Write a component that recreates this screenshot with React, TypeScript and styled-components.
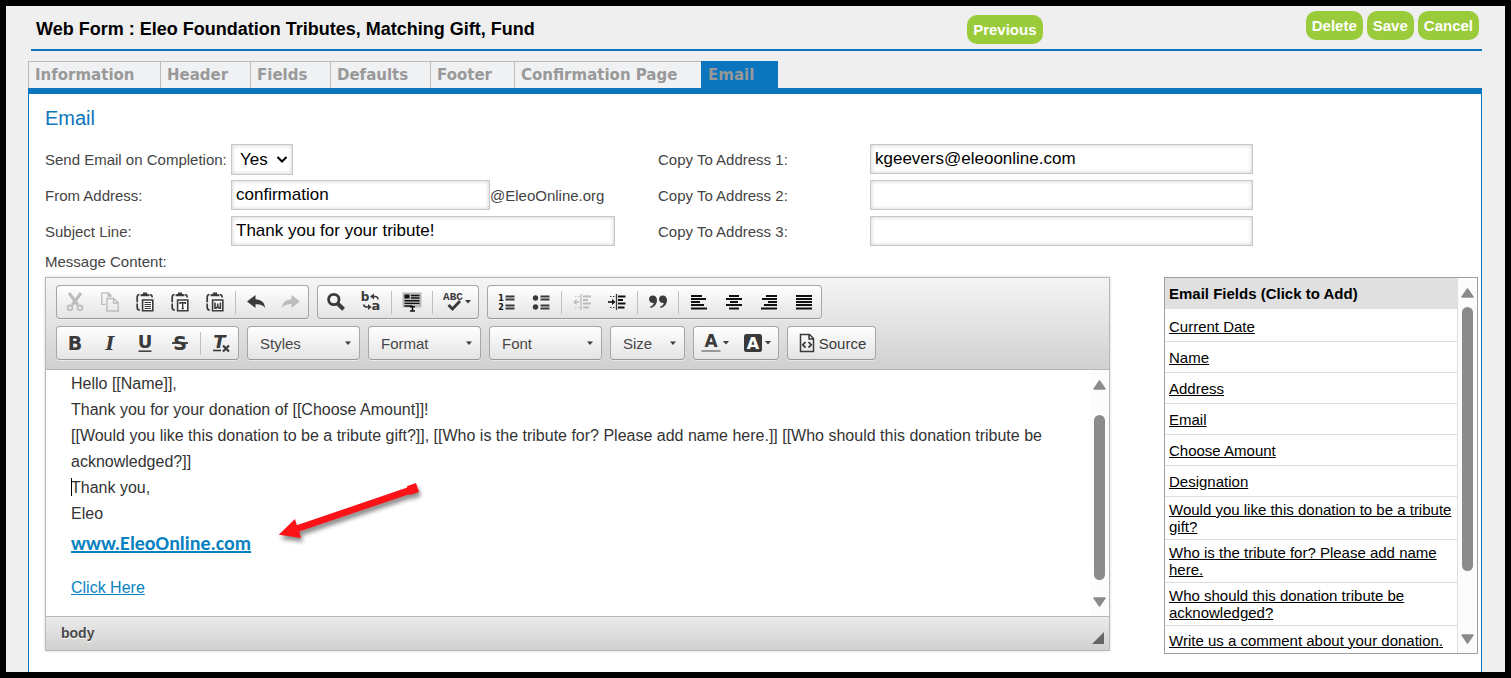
import React, { useState } from 'react';
import styled, { createGlobalStyle } from 'styled-components';

const blue = '#0b75bd';
const ink = '#3a3a3a';
const sans = "'Liberation Sans', Arial, Helvetica, sans-serif";

const GlobalStyle = createGlobalStyle`
  *, *::before, *::after { box-sizing: border-box; }
  body { margin: 0; font-family: ${sans}; font-size: 15px; color: #444; }
  input, select, button { font-family: inherit; margin: 0; }
`;

const Frame = styled.div`
  display: flex;
  flex-direction: column;
  min-height: 100vh;
  padding: 0 23px 0 22px;
  border: 6px solid #000;
  background: #efefef;
`;

const Header = styled.header`
  display: flex;
  height: 45px;
  flex: none;
  margin-left: 3px;
  padding: 5px 3px 0 5px;
  border-bottom: 2px solid ${blue};
`;

const Title = styled.h1`
  flex: 11 1 0;
  margin: 7px 0 0;
  font-size: 18px;
  line-height: 22px;
  color: #000;
`;

const Steps = styled.div`
  flex: 4 1 0;
  padding-top: 4px;
`;

const Actions = styled.div`
  display: flex;
  gap: 4px;
`;

const PillButton = styled.button`
  height: 29px;
  padding: 0 6px;
  border: 0;
  border-radius: 10px;
  background: #9acb3b;
  color: #fff;
  font-size: 15px;
  font-weight: bold;
`;

const Tabs = styled.nav`
  display: flex;
  flex: none;
  margin-top: 10px;
  border-bottom: 6px solid ${blue};
`;

const Tab = styled.a<{ $active?: boolean; $width: number }>`
  width: ${p => p.$width}px;
  height: 27px;
  padding-left: 6px;
  border-top: 1px solid ${p => (p.$active ? blue : '#bbb')};
  border-left: 1px solid ${p => (p.$active ? blue : '#bbb')};
  background: ${p => (p.$active ? blue : '#f0f1f3')};
  font: bold 15px/26px 'DejaVu Sans', Verdana, sans-serif;
  color: #999;
  text-decoration: none;
  white-space: nowrap;
`;

const Panel = styled.main`
  flex: 1;
  padding: 12px 3px 16px 16px;
  border: solid ${blue};
  border-width: 0 1px;
  background: #fff;
`;

const PanelTitle = styled.h2`
  margin: 0 0 14px;
  font-size: 20px;
  line-height: 24px;
  font-weight: normal;
  color: ${blue};
`;

const Form = styled.form`
  display: grid;
  grid-template-columns: 186px minmax(0, 384px) 255px minmax(0, 383px);
  grid-auto-rows: 30px;
  row-gap: 6px;
  align-items: center;
`;

const Label = styled.label<{ $indent?: boolean }>`
  padding-left: ${p => (p.$indent ? 43 : 0)}px;
  white-space: nowrap;
`;

const Field = styled.div`
  display: flex;
  align-items: center;
`;

const TextBox = styled.input<{ $width?: string }>`
  width: ${p => p.$width ?? '100%'};
  height: 30px;
  padding: 0 4px 1px;
  border: 1px solid #c8c8c8;
  background: #fff;
  box-shadow: inset 0 0 4px #ccc;
  font-size: 17px;
  color: #000;
`;

const SelectBox = styled.span<{ $width: number }>`
  position: relative;
  display: block;
  width: ${p => p.$width}px;
`;

const YesNo = styled.select`
  appearance: none;
  display: block;
  width: 100%;
  height: 31px;
  padding: 0 8px;
  border: 1px solid #c8c8c8;
  border-radius: 0;
  background: #fff;
  box-shadow: inset 0 0 4px #ccc;
  font-size: 17px;
  color: #000;
`;

const SelectArrow = styled.svg<{ $right: number }>`
  position: absolute;
  right: ${p => p.$right}px;
  top: 0;
  height: 100%;
  pointer-events: none;
`;

const MessageLabel = styled.div`
  margin-top: 6px;
  line-height: 20px;
`;

const Columns = styled.div`
  display: grid;
  grid-template-columns: minmax(0, 1fr) 314px;
  gap: 54px;
  align-items: start;
  margin-top: 5px;
`;

const Editor = styled.section`
  border: 1px solid #b6b6b6;
  box-shadow: 0 0 3px rgba(0, 0, 0, 0.15);
`;

const Toolbar = styled.div`
  display: flex;
  flex-direction: column;
  gap: 7px;
  padding: 7px 10px 9px;
  border-bottom: 1px solid #b6b6b6;
  background: linear-gradient(#f5f5f5, #cfd1cf);
`;

const ToolRow = styled.div`
  display: flex;
  gap: 8px;
`;

const toolBox = `
  height: 34px;
  border: 1px solid #a6a6a6;
  border-bottom-color: #979797;
  border-radius: 4px;
  background: linear-gradient(#fff, #e4e4e4);
  box-shadow: 0 1px 0 rgba(255, 255, 255, 0.5);
`;

const ToolGroup = styled.div`
  display: flex;
  align-items: center;
  ${toolBox}
`;

const ToolButton = styled.button<{ $width?: number; $faded?: boolean }>`
  display: flex;
  align-items: center;
  justify-content: center;
  gap: 2px;
  width: ${p => p.$width ?? 35}px;
  height: 32px;
  padding: 0;
  border: 0;
  background: none;
  color: ${p => (p.$faded ? '#bcbcbc' : ink)};
  font-size: 15px;
`;

const Separator = styled.i`
  width: 1px;
  height: 23px;
  margin: 0 2px 0 3px;
  background: #bfbfbf;
`;

const Combo = styled.select`
  appearance: none;
  display: block;
  width: 100%;
  padding: 0 12px;
  color: #474747;
  font-size: 15px;
  ${toolBox}
`;

const Body = styled.div`
  position: relative;
  display: flex;
  height: 246px;
  background: #fff;
`;

const Message = styled.div`
  flex: 1;
  min-width: 0;
  padding: 1px 25px 0;
  font-size: 16px;
  line-height: 26px;
  color: #333;

  p { margin: 0; }
`;

const Caret = styled.span`
  position: absolute;
  width: 1px;
  height: 18px;
  margin-top: 3px;
  background: #000;
`;

const MessageLink = styled.a`
  color: #0782c1;
`;

const SiteLine = styled.p`
  && { margin: 3px 0 19px; }
  font: bold 20px/26px Calibri, Carlito, Lato, sans-serif;
`;

const RedArrow = styled.svg`
  position: absolute;
  left: 224px;
  top: 104px;
  overflow: visible;
  filter: drop-shadow(2px 4px 2px rgba(0, 0, 0, 0.45));
`;

const Footer = styled.footer`
  display: flex;
  align-items: center;
  justify-content: space-between;
  height: 34px;
  padding: 0 5px 2px 15px;
  border-top: 1px solid #b6b6b6;
  background: linear-gradient(#ebebeb, #cfd1cf);
  font-size: 14px;
  font-weight: bold;
  color: #484848;
  text-shadow: 0 1px 0 #fff;
`;

const ResizeGrip = styled.svg`
  align-self: flex-end;
  margin-bottom: 4px;
`;

const ScrollBar = styled.div<{ $top: number; $bottom: number }>`
  display: flex;
  flex-direction: column;
  align-items: center;
  flex: none;
  width: 19px;
  padding: ${p => p.$top}px 0 ${p => p.$bottom}px;
  background: #fcfcfc;
`;

const Track = styled.div<{ $before: number; $after: number }>`
  flex: 1;
  width: 11px;
  padding: ${p => p.$before}px 0 ${p => p.$after}px;

  &::before {
    content: '';
    display: block;
    height: 100%;
    border-radius: 6px;
    background: #8b8b8b;
  }
`;

const FieldList = styled.aside`
  display: flex;
  height: 377px;
  border: 1px solid #a0a0a0;
  background: #fff;
  overflow: hidden;
`;

const FieldTable = styled.table`
  flex: 1;
  align-self: flex-start;
  border-collapse: separate;
  border-spacing: 0;
  font-size: 15px;
  line-height: 17px;
  color: #000;

  th {
    height: 31px;
    padding: 0 4px;
    background: #e0e0e0;
    text-align: left;
  }

  td {
    height: 31px;
    padding: 4px 2px 4px 4px;
    border-right: 1px solid #ddd;
    border-bottom: 1px solid #ddd;
  }

  tr:first-child td { height: 33px; padding-top: 6px; }

  tr:last-child td { padding: 4px 2px 6px 4px; }

  a { color: #000; }
`;

const Icon = styled.svg`
  flex: none;
  overflow: visible;
`;

const Svg = ({ children }: { children: React.ReactNode }) => (
  <Icon width="20" height="20" viewBox="0 0 20 20" fill="none" stroke="currentColor" aria-hidden="true">
    {children}
  </Icon>
);

const Glyph = ({ children, ...rest }: React.SVGProps<SVGTextElement>) => (
  <text fontWeight="bold" fontFamily="'DejaVu Sans', sans-serif" textAnchor="middle" fill="currentColor" stroke="none" {...rest}>
    {children}
  </text>
);

const Clipboard = ({ children }: { children: React.ReactNode }) => (
  <Svg>
    <path d="M4.500 2.500Q2.200 2.800 2.200 5V15.500Q2.200 18 4.800 18" strokeWidth="1.700" strokeDasharray="9 1.200" />
    <path d="M15 2.500Q17.200 2.800 17.200 5.400" strokeWidth="1.600" />
    <path d="M5.500 4.200V2.400L8 1.800V.6h4v1.200l2.500.6v1.800z" fill="currentColor" stroke="none" />
    <path d="M7.600 8h10.200v10.800H7.600z" strokeWidth="1.600" fill="#fff" />
    {children}
  </Svg>
);

const DownArrow = () => (
  <Icon width="6" height="4" viewBox="0 0 6 4" aria-hidden="true"><path d="M0 0h6L3 3.500z" fill={ink} /></Icon>
);

const icons: Record<string, React.ReactNode> = {
  Cut: (
    <Svg>
      <path d="M4 1 12.800 13M16 1 7.200 13" strokeWidth="3" />
      <circle cx="5" cy="15.800" r="2.400" strokeWidth="1.800" />
      <circle cx="15" cy="15.800" r="2.400" strokeWidth="1.800" />
    </Svg>
  ),
  Copy: (
    <Svg>
      <path d="M5.500 12.300H1.800V.8h6.400L11 3.600V5M8 1v3h3" strokeWidth="1.300" />
      <path d="M7 6.500h6.700l4.500 4.300V19H7zM13.500 6.600V11H18" strokeWidth="1.400" />
    </Svg>
  ),
  Paste: <Clipboard><path d="M9.500 10.500H16M9.500 12.500H16M9.500 14.500H16M9.500 16.500H16" strokeWidth="1.200" /></Clipboard>,
  'Paste as plain text': <Clipboard><path d="M10 12v-1.300h5.400V12M12.700 10.700v6M11.500 16.600h2.400" strokeWidth="1.400" /></Clipboard>,
  'Paste from Word': <Clipboard><path d="M10 10.500v5.800h1.200l1.500-2 1.500 2h1.200v-5.800M12.700 11.500v3" strokeWidth="1.600" /></Clipboard>,
  Undo: <Svg><path d="M1 9.500 9.500 3v4.200C15 7.300 18.800 10.500 19 16c-2-3-5-4-9.500-3.700V16z" fill="currentColor" stroke="none" /></Svg>,
  Redo: <Svg><path d="M19 9.500 10.500 3v4.200C5 7.300 1.200 10.500 1 16c2-3 5-4 9.500-3.700V16z" fill="currentColor" stroke="none" /></Svg>,
  Find: <Svg><circle cx="7.800" cy="7.500" r="5.200" strokeWidth="2.800" /><path d="m11.800 11.800 5.800 5.500" strokeWidth="4" /></Svg>,
  Replace: (
    <Svg>
      <Glyph x={4} y={9} fontSize={12}>b</Glyph>
      <Glyph x={15} y={18} fontSize={13}>a</Glyph>
      <path d="M12 4.500h2q3 0 3 3M8 15H6q-3 0-3.500-2.500" strokeWidth="1.500" />
      <path d="m9 4.500 4-3v6zM10.500 15 7 12v6z" fill="currentColor" stroke="none" />
    </Svg>
  ),
  'Select all': (
    <Svg>
      <path d="M.5.500h19v15H.5z" fill="#b8b8b8" stroke="none" />
      <path d="M2.500 2.500h5v4h-5z" fill="#111" stroke="none" />
      <path d="M9 3.500h8.500M9 6h8.500M2.500 8.800h15M2.500 11.400h15M2.500 14h8" stroke="#111" strokeWidth="1.400" />
      <path d="M8 14.800h5M10.500 14.800v4M8 19h5" stroke="#111" strokeWidth="1.500" />
    </Svg>
  ),
  'Spell check': (
    <>
      <Svg>
        <Glyph x={10} y={8} fontSize={11} fontFamily="'Liberation Mono', monospace">ABC</Glyph>
        <path d="m5.500 13 4 4 7.500-8" strokeWidth="2.800" />
      </Svg>
      <DownArrow />
    </>
  ),
  'Numbered list': (
    <Svg>
      <Glyph x={5} y={9} fontSize={8} fill="#111">1</Glyph>
      <Glyph x={5} y={18} fontSize={8} fill="#111">2</Glyph>
      <path d="M9.500 4.500h9M9.500 7.500h9M9.500 13.500h9M9.500 16.500h9" strokeWidth="1.800" />
    </Svg>
  ),
  'Bulleted list': (
    <Svg>
      <circle cx="4.500" cy="6" r="2.700" fill="currentColor" stroke="none" />
      <circle cx="4.500" cy="15" r="2.700" fill="currentColor" stroke="none" />
      <path d="M9.500 4.500h9M9.500 7.500h9M9.500 13.500h9M9.500 16.500h9" strokeWidth="1.800" />
    </Svg>
  ),
  'Decrease indent': (
    <Svg>
      <path d="M9 2v16" strokeWidth="1.300" />
      <path d="M11 4.500h8M11 8h5M11 11.500h8M11 15.500h6" strokeWidth="1.800" />
      <path d="M2 10h5.500" strokeWidth="1.400" />
      <path d="m1 10 3.500-3v6z" fill="currentColor" stroke="none" />
      <path d="M3 4.500h5M3 15.500h5" strokeDasharray="1.500 1.500" />
    </Svg>
  ),
  'Increase indent': (
    <Svg>
      <path d="M9.500 2v16" strokeWidth="1.300" />
      <path d="M11 4.500h7.500M11 8h5M11 11.500h7.500M11 15.500h6.500" stroke="#111" strokeWidth="1.800" />
      <path d="M1 10h5" stroke="#111" strokeWidth="1.600" />
      <path d="M8.500 10 5 7v6z" fill="#111" stroke="none" />
      <path d="M3 4.500h5M3 15.500h5" strokeDasharray="1.500 1.500" />
    </Svg>
  ),
  'Block quote': (
    <Svg>
      <path
        d="M4.700 3.500C7.300 3.500 9 5.300 9 8c0 4-2.500 7-6.500 8L2 14.700C4.500 13.700 5.700 12.500 5.800 11 3.200 11.300 1 9.800 1 7.300 1 5.100 2.500 3.500 4.700 3.500zM14.700 3.500C17.300 3.500 19 5.300 19 8c0 4-2.500 7-6.500 8L12 14.700c2.500-1 3.700-2.200 3.800-3.700-2.600.3-4.800-1.200-4.800-3.700 0-2.200 1.500-3.800 3.700-3.800z"
        fill="currentColor"
        stroke="none"
      />
    </Svg>
  ),
  'Align left': <Svg><path d="M2 4h11M2 7h15M2 10h9M2 13h13M2 16.500h16" stroke="#111" strokeWidth="1.900" /></Svg>,
  Center: <Svg><path d="M5 4h10M2 7h16M6 10h8M2 13h16M5 16.500h10" stroke="#111" strokeWidth="1.900" /></Svg>,
  'Align right': <Svg><path d="M7 4h11M3 7h15M9 10h9M5 13h13M2 16.500h16" stroke="#111" strokeWidth="1.900" /></Svg>,
  Justify: <Svg><path d="M2 4h16M2 7h16M2 10h16M2 13h16M2 16.500h16" stroke="#111" strokeWidth="1.900" /></Svg>,
  Bold: <Svg><Glyph x={10} y={17} fontSize={19}>B</Glyph></Svg>,
  Italic: <Svg><Glyph x={10} y={17} fontSize={19} fontFamily="'DejaVu Serif', serif" fontStyle="italic">I</Glyph></Svg>,
  Underline: <Svg><Glyph x={10} y={15} fontSize={18}>U</Glyph><path d="M3.500 18.200h13" strokeWidth="1.500" /></Svg>,
  Strikethrough: <Svg><Glyph x={10} y={17} fontSize={19}>S</Glyph><path d="M2 10h16" strokeWidth="1.800" /></Svg>,
  'Remove format': (
    <Svg>
      <Glyph x={8.500} y={14.500} fontSize={18} fontStyle="italic">T</Glyph>
      <path d="M2 17.500h8" strokeWidth="1.600" />
      <path d="m12 12.500 6 6M18 12.500l-6 6" strokeWidth="2.200" />
    </Svg>
  ),
  'Text colour': (
    <>
      <Svg><Glyph x={10} y={14} fontSize={17}>A</Glyph><path d="M.5 18h19" stroke="#999" strokeWidth="2" /></Svg>
      <DownArrow />
    </>
  ),
  'Background colour': (
    <>
      <Svg>
        <rect x="1" y="1" width="18" height="18" rx="2.500" fill={ink} stroke="none" />
        <Glyph x={10} y={16} fontSize={16} fill="#fff">A</Glyph>
      </Svg>
      <DownArrow />
    </>
  ),
  Source: (
    <Svg>
      <path d="M3.500 1.500h9l4 4v13h-13zM12 1.500V6h4.500" strokeWidth="1.500" />
      <path d="m8.500 9-2.700 2.800 2.700 2.800M11.500 9l2.700 2.800-2.700 2.800" strokeWidth="1.800" />
    </Svg>
  ),
};

const Tool = ({ name, width, faded }: { name: string; width?: number; faded?: boolean }) => (
  <ToolButton type="button" aria-label={name} $width={width} $faded={faded}>{icons[name]}</ToolButton>
);

const ToolCombo = ({ name, width }: { name: string; width: number }) => (
  <SelectBox $width={width}>
    <Combo aria-label={name} defaultValue={name}><option>{name}</option></Combo>
    <SelectArrow $right={9} width="6" viewBox="0 0 6 4"><path d="M0 .5h6L3 4z" fill={ink} /></SelectArrow>
  </SelectBox>
);

const Triangle = ({ down }: { down?: boolean }) => (
  <Icon width="13" height="10" viewBox="0 0 13 10" aria-hidden="true">
    <path
      d={down ? 'M1 1h11L6.500 9z' : 'M1 9h11L6.500 1z'}
      fill="#8b8b8b"
      stroke="#8b8b8b"
      strokeWidth="1.500"
      strokeLinejoin="round"
    />
  </Icon>
);

const Scroller = ({ top, bottom, before, after }: { top: number; bottom: number; before: number; after: number }) => (
  <ScrollBar $top={top} $bottom={bottom} aria-hidden="true">
    <Triangle />
    <Track $before={before} $after={after} />
    <Triangle down />
  </ScrollBar>
);

const tabs: [string, number][] = [
  ['Information', 132], ['Header', 90], ['Fields', 80], ['Defaults', 100],
  ['Footer', 84], ['Confirmation Page', 187], ['Email', 77],
];

const emailFields = [
  'Current Date', 'Name', 'Address', 'Email', 'Choose Amount', 'Designation',
  'Would you like this donation to be a tribute gift?',
  'Who is the tribute for? Please add name here.',
  'Who should this donation tribute be acknowledged?',
  'Write us a comment about your donation.',
];

export default function App() {
  const [values, setValues] = useState<Record<string, string>>({
    from: 'confirmation',
    subject: 'Thank you for your tribute!',
    copy1: 'kgeevers@eleoonline.com',
    copy2: '',
    copy3: '',
  });
  const bind = (id: string) => ({
    id,
    value: values[id],
    onChange: (e: React.ChangeEvent<HTMLInputElement>) => setValues({ ...values, [id]: e.target.value }),
  });

  return (
    <Frame>
      <GlobalStyle />
      <Header>
        <Title>Web Form : Eleo Foundation Tributes, Matching Gift, Fund</Title>
        <Steps><PillButton type="button">Previous</PillButton></Steps>
        <Actions>
          <PillButton type="button">Delete</PillButton>
          <PillButton type="button">Save</PillButton>
          <PillButton type="button">Cancel</PillButton>
        </Actions>
      </Header>

      <Tabs>
        {tabs.map(([name, width]) => (
          <Tab key={name} href="#" $width={width} $active={name === 'Email'}>{name}</Tab>
        ))}
      </Tabs>

      <Panel>
        <PanelTitle>Email</PanelTitle>
        <Form>
          <Label htmlFor="send">Send Email on Completion:</Label>
          <SelectBox $width={62}>
            <YesNo id="send" defaultValue="Yes"><option>Yes</option><option>No</option></YesNo>
            <SelectArrow $right={5} width="12" viewBox="0 0 12 8">
              <path d="m1.500 1.500 4.500 4.500 4.500-4.500" fill="none" stroke="#000" strokeWidth="2" />
            </SelectArrow>
          </SelectBox>
          <Label $indent htmlFor="copy1">Copy To Address 1:</Label>
          <TextBox {...bind('copy1')} />

          <Label htmlFor="from">From Address:</Label>
          <Field><TextBox $width="259px" {...bind('from')} />@EleoOnline.org</Field>
          <Label $indent htmlFor="copy2">Copy To Address 2:</Label>
          <TextBox {...bind('copy2')} />

          <Label htmlFor="subject">Subject Line:</Label>
          <TextBox {...bind('subject')} />
          <Label $indent htmlFor="copy3">Copy To Address 3:</Label>
          <TextBox {...bind('copy3')} />
        </Form>

        <MessageLabel>Message Content:</MessageLabel>
        <Columns>
          <Editor>
            <Toolbar>
              <ToolRow>
                <ToolGroup>
                  <Tool name="Cut" faded /><Tool name="Copy" faded /><Tool name="Paste" />
                  <Tool name="Paste as plain text" /><Tool name="Paste from Word" />
                  <Separator />
                  <Tool name="Undo" /><Tool name="Redo" faded />
                </ToolGroup>
                <ToolGroup>
                  <Tool name="Find" /><Tool name="Replace" /><Separator />
                  <Tool name="Select all" /><Separator />
                  <Tool name="Spell check" width={43} />
                </ToolGroup>
                <ToolGroup>
                  <Tool name="Numbered list" /><Tool name="Bulleted list" /><Separator />
                  <Tool name="Decrease indent" faded /><Tool name="Increase indent" /><Separator />
                  <Tool name="Block quote" /><Separator />
                  <Tool name="Align left" /><Tool name="Center" /><Tool name="Align right" /><Tool name="Justify" />
                </ToolGroup>
              </ToolRow>
              <ToolRow>
                <ToolGroup>
                  <Tool name="Bold" /><Tool name="Italic" /><Tool name="Underline" /><Tool name="Strikethrough" />
                  <Separator /><Tool name="Remove format" />
                </ToolGroup>
                <ToolCombo name="Styles" width={113} />
                <ToolCombo name="Format" width={113} />
                <ToolCombo name="Font" width={113} />
                <ToolCombo name="Size" width={75} />
                <ToolGroup>
                  <Tool name="Text colour" width={42} /><Tool name="Background colour" width={42} />
                </ToolGroup>
                <ToolGroup>
                  <ToolButton type="button" $width={87}>{icons.Source}Source</ToolButton>
                </ToolGroup>
              </ToolRow>
            </Toolbar>
            <Body>
              <Message>
                <p>Hello [[Name]],</p>
                <p>Thank you for your donation of [[Choose Amount]]!</p>
                <p>
                  [[Would you like this donation to be a tribute gift?]], [[Who is the tribute for? Please add name
                  here.]] [[Who should this donation tribute be acknowledged?]]
                </p>
                <p><Caret />Thank you,</p>
                <p>Eleo</p>
                <SiteLine><MessageLink href="#">www.EleoOnline.com</MessageLink></SiteLine>
                <p><MessageLink href="#">Click Here</MessageLink></p>
              </Message>
              <Scroller top={10} bottom={9} before={25} after={17} />
              <RedArrow width="160" height="70" aria-hidden="true">
                <path d="M8.700 60.700 25 45l1.700 6.300L137.300 13.500l-.5-1.300L146 9l3 9-9 3-1.500-.6L29.300 57.500l1.700 6.500z" fill="#fb1317" />
              </RedArrow>
            </Body>
            <Footer>
              body
              <ResizeGrip width="12" height="12" aria-hidden="true"><path d="M12 0v12H0z" fill="#666" /></ResizeGrip>
            </Footer>
          </Editor>
          <FieldList>
            <FieldTable>
              <thead><tr><th scope="col">Email Fields (Click to Add)</th></tr></thead>
              <tbody>
                {emailFields.map(name => (
                  <tr key={name}><td><a href="#">{name}</a></td></tr>
                ))}
              </tbody>
            </FieldTable>
            <Scroller top={10} bottom={9} before={9} after={63} />
          </FieldList>
        </Columns>
      </Panel>
    </Frame>
  );
}
